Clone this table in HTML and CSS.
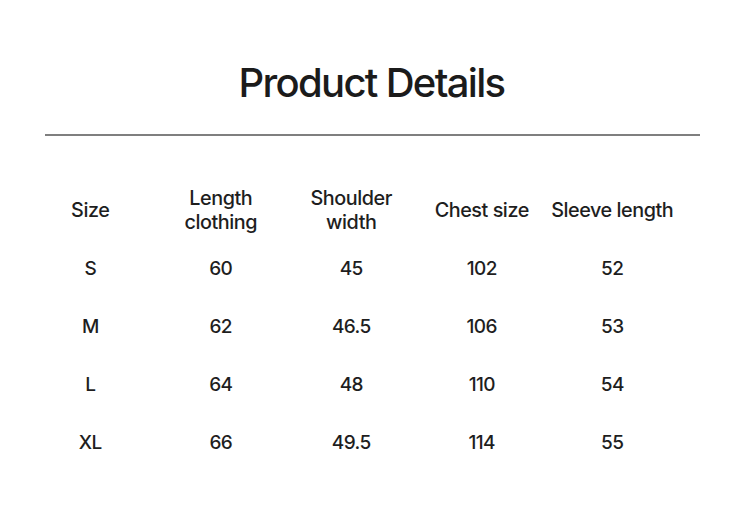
FILE: index.html
```html
<!DOCTYPE html>
<html lang="en">
<head>
<meta charset="utf-8">
<title>Product Details</title>
<link rel="stylesheet" href="styles.css">
</head>
<body>
<main class="page">
  <h1 class="title">Product Details</h1>
  <div class="rule"></div>
  <div class="table">
    <div class="cell head">Size</div>
    <div class="cell head">Length<br>clothing</div>
    <div class="cell head">Shoulder<br>width</div>
    <div class="cell head">Chest size</div>
    <div class="cell head">Sleeve length</div>

    <div class="cell">S</div><div class="cell">60</div><div class="cell">45</div><div class="cell">102</div><div class="cell">52</div>
    <div class="cell">M</div><div class="cell">62</div><div class="cell">46.5</div><div class="cell">106</div><div class="cell">53</div>
    <div class="cell">L</div><div class="cell">64</div><div class="cell">48</div><div class="cell">110</div><div class="cell">54</div>
    <div class="cell">XL</div><div class="cell">66</div><div class="cell">49.5</div><div class="cell">114</div><div class="cell">55</div>
  </div>
</main>
</body>
</html>
```

FILE: styles.css
```css
html, body {
  margin: 0;
  padding: 0;
  background: #ffffff;
}
body {
  font-family: Inter, "Liberation Sans", Arial, sans-serif;
  color: #1e1e1e;
  width: 745px;
  height: 532px;
  overflow: hidden;
}
.page {
  padding-top: 57px;
}
.title {
  margin: 0;
  text-align: center;
  font-size: 40px;
  line-height: 52px;
  font-weight: 500;
  letter-spacing: -1.7px;
  color: #1b1b1b;
  padding-right: 2px;
}
.rule {
  margin: 25px 0 0 45px;
  width: 655px;
  height: 2px;
  background: #7f7f7f;
}
.table {
  margin-top: 45px;
  padding-left: 25px;
  display: grid;
  grid-template-columns: repeat(5, 130.5px);
  grid-auto-rows: 58px;
}
.cell {
  display: flex;
  align-items: center;
  justify-content: center;
  text-align: center;
  padding-top: 2px;
  font-size: 19px;
  line-height: 24px;
  font-weight: 500;
  letter-spacing: -0.6px;
  color: #1e1e1e;
}
.head {
  padding-top: 0;
  font-size: 19.8px;
  letter-spacing: -0.45px;
}
```
